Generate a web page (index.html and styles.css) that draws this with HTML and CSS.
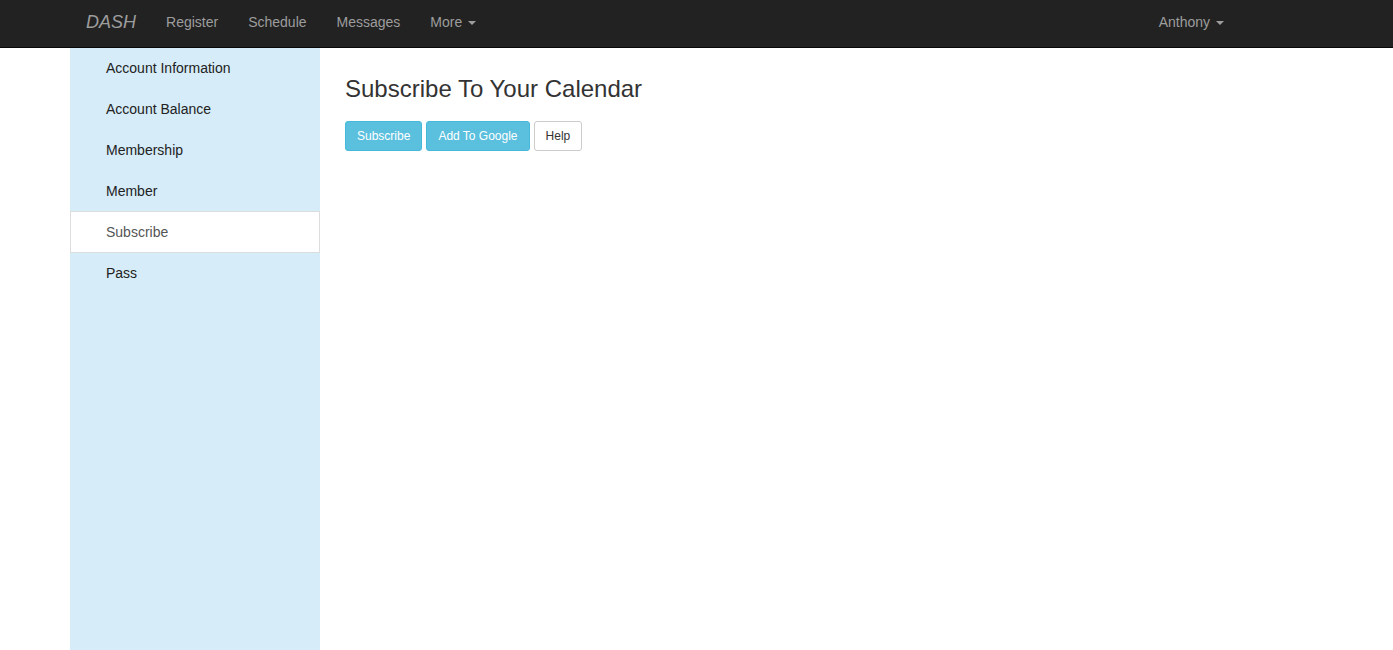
FILE: index.html
```html
<!DOCTYPE html>
<html>
<head>
<meta charset="utf-8">
<link rel="stylesheet" href="styles.css">
</head>
<body>
<nav class="navbar">
  <div class="nav-inner">
    <div class="nav-left">
      <a class="brand">DASH</a>
      <a class="nav-link">Register</a>
      <a class="nav-link">Schedule</a>
      <a class="nav-link">Messages</a>
      <a class="nav-link">More <span class="caret"></span></a>
    </div>
    <div class="nav-right">
      <a class="nav-link">Anthony <span class="caret"></span></a>
    </div>
  </div>
</nav>
<div class="page">
  <aside class="sidebar">
    <a class="side-item">Account Information</a>
    <a class="side-item">Account Balance</a>
    <a class="side-item">Membership</a>
    <a class="side-item">Member</a>
    <a class="side-item active">Subscribe</a>
    <a class="side-item">Pass</a>
  </aside>
  <main class="content">
    <h1 class="title">Subscribe To Your Calendar</h1>
    <div class="btns">
      <button class="btn btn-info">Subscribe</button>
      <button class="btn btn-info">Add To Google</button>
      <button class="btn btn-default">Help</button>
    </div>
  </main>
</div>
</body>
</html>
```

FILE: styles.css
```css
* { box-sizing: border-box; }
html, body { margin: 0; padding: 0; height: 100%; }
body {
  font-family: "Liberation Sans", Arial, sans-serif;
  font-size: 14px;
  line-height: 20px;
  color: #333;
  background: #fff;
  display: flex;
  flex-direction: column;
}
.navbar {
  background: #222;
  border-bottom: 1px solid #080808;
  height: 48px;
  flex: none;
}
.nav-inner {
  margin-left: 71px;
  width: 1168px;
  height: 47px;
  display: flex;
  justify-content: space-between;
}
.nav-left, .nav-right { display: flex; align-items: stretch; }
.brand {
  font-size: 18px;
  font-style: italic;
  color: #9d9d9d;
  padding: 0 15px;
  display: flex;
  align-items: center;
  padding-bottom: 3px;
}
.nav-link {
  color: #9d9d9d;
  padding: 0 15px;
  display: flex;
  align-items: center;
  padding-bottom: 3px;
}
.nav-link:last-child .caret { margin-left: 6px; }
.caret {
  display: inline-block;
  width: 0; height: 0;
  margin-left: 5px;
  border-top: 4px solid #9d9d9d;
  border-left: 4px solid transparent;
  border-right: 4px solid transparent;
  margin-top: 2px;
}
.page {
  flex: 1;
  display: flex;
  padding-left: 70px;
}
.sidebar {
  width: 250px;
  background: #d6ecf8;
  display: flex;
  flex-direction: column;
  flex: none;
}
.side-item {
  display: block;
  height: 41px;
  line-height: 41px;
  padding-left: 36px;
  color: #222;
}
.side-item.active {
  background: #fff;
  color: #555;
  border: 1px solid #ddd;
  padding-left: 35px;
  height: 42px;
  margin-top: -1px;
  line-height: 41px;
}
.content {
  padding-left: 25px;
  padding-top: 28px;
}
.title {
  font-size: 24px;
  font-weight: 500;
  line-height: 26px;
  margin: 0 0 19px 0;
  color: #333;
}
.btns { display: flex; gap: 4px; }
.btn {
  font-family: "Liberation Sans", Arial, sans-serif;
  font-size: 12px;
  line-height: 18px;
  padding: 5px 11px;
  border-radius: 3px;
  border: 1px solid;
  height: 30px;
}
.btn-info { background: #5bc0de; border-color: #46b8da; color: #fff; }
.btn-default { background: #fff; border-color: #ccc; color: #333; }
```
